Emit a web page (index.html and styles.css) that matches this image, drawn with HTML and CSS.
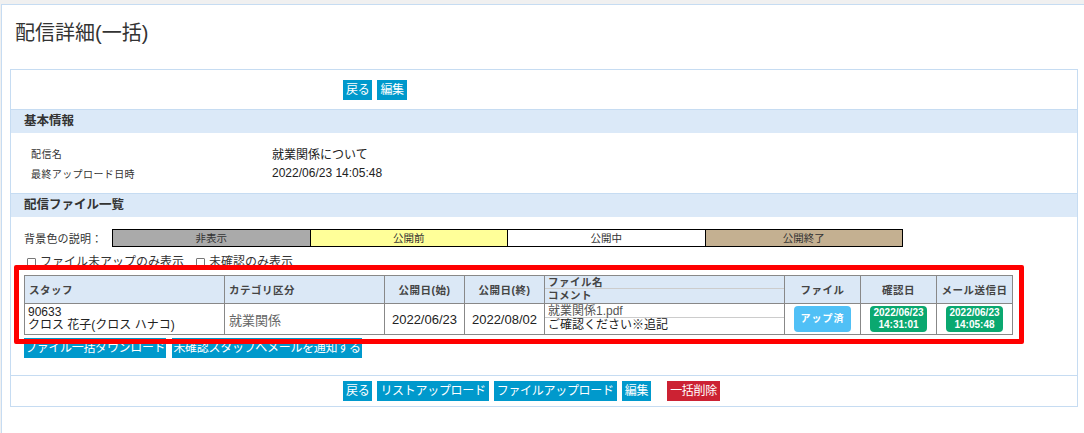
FILE: index.html
```html
<!DOCTYPE html>
<html lang="ja">
<head>
  <meta charset="UTF-8">
  <title>配信詳細(一括)</title>
  <link rel="stylesheet" href="styles.css">
</head>
<body>
<div class="page">
  <h1 class="page-title">配信詳細(一括)</h1>

  <div class="panel">
    <div class="toolbar toolbar-top">
      <a class="btn">戻る</a>
      <a class="btn">編集</a>
    </div>

    <!-- 基本情報 -->
    <div class="section-head">基本情報</div>
    <dl class="info">
      <div class="info-row">
        <dt>配信名</dt>
        <dd>就業関係について</dd>
      </div>
      <div class="info-row">
        <dt>最終アップロード日時</dt>
        <dd>2022/06/23 14:05:48</dd>
      </div>
    </dl>

    <!-- 配信ファイル一覧 -->
    <div class="section-head">配信ファイル一覧</div>
    <div class="files">
      <div class="legend">
        <span class="legend-label">背景色の説明：</span>
        <div class="legend-bar">
          <span class="lg-hidden">非表示</span>
          <span class="lg-before">公開前</span>
          <span class="lg-open">公開中</span>
          <span class="lg-closed">公開終了</span>
        </div>
      </div>

      <div class="filters">
        <label><span class="check"></span>ファイル未アップのみ表示</label>
        <label><span class="check"></span>未確認のみ表示</label>
      </div>

      <div class="result">
        <table class="file-table">
          <colgroup>
            <col class="c-staff">
            <col class="c-cat">
            <col class="c-date">
            <col class="c-date">
            <col class="c-file">
            <col class="c-up">
            <col class="c-badge">
            <col class="c-badge">
          </colgroup>
          <thead>
            <tr>
              <th class="left">スタッフ</th>
              <th class="left">カテゴリ区分</th>
              <th>公開日(始)</th>
              <th>公開日(終)</th>
              <th class="split">
                <div class="split-top">ファイル名</div>
                <div class="split-bottom">コメント</div>
              </th>
              <th>ファイル</th>
              <th>確認日</th>
              <th>メール送信日</th>
            </tr>
          </thead>
          <tbody>
            <tr>
              <td class="staff">90633<br>クロス 花子(クロス ハナコ)</td>
              <td class="cat">就業関係</td>
              <td class="center">2022/06/23</td>
              <td class="center">2022/08/02</td>
              <td class="split">
                <div class="split-top">就業関係1.pdf</div>
                <div class="split-bottom">ご確認ください※追記</div>
              </td>
              <td class="center"><span class="badge badge-up">アップ済</span></td>
              <td class="center"><span class="badge badge-done">2022/06/23<br>14:31:01</span></td>
              <td class="center"><span class="badge badge-done">2022/06/23<br>14:05:48</span></td>
            </tr>
          </tbody>
        </table>

        <div class="bulk-actions">
          <a class="btn btn-tight">ファイル一括ダウンロード</a>
          <a class="btn btn-tight">未確認スタッフへメールを通知する</a>
        </div>

        <div class="highlight"></div>
      </div>
    </div>

    <div class="toolbar toolbar-bottom">
      <a class="btn">戻る</a>
      <a class="btn">リストアップロード</a>
      <a class="btn">ファイルアップロード</a>
      <a class="btn">編集</a>
      <a class="btn btn-danger">一括削除</a>
    </div>
  </div>
</div>
</body>
</html>
```

FILE: styles.css
```css
* {
  box-sizing: border-box;
}

body {
  margin: 0;
  background: #f0f0f0;
  font-family: "Liberation Sans", "Noto Sans CJK JP", sans-serif;
  color: #333;
  overflow: hidden;
}

.page {
  height: 429px;
  margin: 4px 0 0 1px;
  background: #fff;
  border-top: 1px solid #c6dcf2;
  border-left: 1px solid #c6dcf2;
}

.page-title {
  margin: 0;
  padding: 13px 0 0 13px;
  font-size: 20px;
  font-weight: normal;
  line-height: 30px;
  color: #333;
}

.panel {
  width: 1068px;
  margin: 21px 0 0 8px;
  border: 1px solid #c6dcf2;
}

/* buttons */
.toolbar {
  display: flex;
  align-items: center;
  gap: 5px;
  padding-left: 332px;
}

.toolbar-top {
  height: 39px;
}

.toolbar-bottom {
  height: 31px;
  border-top: 1px solid #c6dcf2;
}

.btn {
  display: inline-block;
  height: 20px;
  padding: 0 3px;
  background: #0099cc;
  color: #fff;
  font-size: 12px;
  line-height: 20px;
  letter-spacing: -0.3px;
  white-space: nowrap;
  cursor: pointer;
}

.btn-tight {
  padding: 0 1px;
}

.btn-danger {
  margin-left: 11px;
  background: #cc2233;
}

/* sections */
.section-head {
  height: 24px;
  padding-left: 13px;
  border-top: 1px solid #c6dcf2;
  background: #dbe9f8;
  font-size: 12.5px;
  font-weight: bold;
  line-height: 23px;
  color: #333;
}

.info {
  height: 60px;
  margin: 0;
  padding: 10px 0 0 20px;
}

.info-row {
  display: flex;
  height: 20px;
  align-items: center;
}

.info dt {
  width: 241px;
  font-size: 10px;
  letter-spacing: 0.4px;
}

.info dd {
  margin: 0;
  font-size: 12px;
  color: #222;
}

.files {
  height: 158px;
  padding: 12px 0 0 13px;
}

.legend {
  display: flex;
  align-items: center;
  height: 18px;
}

.legend-label {
  width: 88px;
  font-size: 11px;
  letter-spacing: 0.2px;
  color: #333;
}

.legend-bar {
  display: flex;
  width: 791px;
  height: 18px;
  border: 1px solid #000;
}

.legend-bar span {
  flex: 1;
  text-align: center;
  font-size: 10.5px;
  line-height: 16px;
  color: #333;
}

.legend-bar span + span {
  border-left: 1px solid #000;
}

.lg-hidden {
  background: #aaaaaa;
}

.lg-before {
  background: #ffff99;
}

.lg-open {
  background: #fff;
}

.lg-closed {
  background: #c4b091;
}

.filters {
  display: flex;
  gap: 12px;
  height: 16px;
  margin: 7px 0 0 3px;
  font-size: 12px;
  line-height: 16px;
}

.filters label {
  display: flex;
  align-items: center;
}

.check {
  display: inline-block;
  width: 9px;
  height: 9px;
  margin-right: 4px;
  border: 1px solid #777;
  border-radius: 1px;
  background: #fff;
}

/* table */
.result {
  position: relative;
  margin-top: 5px;
  width: 989px;
}

.file-table {
  width: 989px;
  border-collapse: collapse;
  table-layout: fixed;
}

.c-staff { width: 200px; }
.c-cat { width: 160px; }
.c-date { width: 80px; }
.c-file { width: 240px; }
.c-up { width: 76px; }
.c-badge { width: 76px; }

.file-table th,
.file-table td {
  border: 1px solid #888;
  padding: 0;
}

.file-table th {
  height: 28px;
  background: #dbe8f6;
  font-size: 10.5px;
  font-weight: bold;
  color: #444;
  letter-spacing: 0.5px;
  text-align: center;
}

.file-table th.left {
  text-align: left;
  padding-left: 4px;
}

.file-table td {
  height: 31px;
  font-size: 12px;
  color: #222;
}

.file-table .center {
  text-align: center;
  font-size: 13px;
}

.file-table .staff {
  padding: 0 3px;
  line-height: 13px;
}

.file-table .cat {
  padding-left: 4px;
  color: #666;
  font-size: 13px;
}

.file-table .split {
  text-align: left;
  vertical-align: top;
}

.split-top {
  height: 14px;
  padding-left: 3px;
  border-bottom: 1px solid #ccc;
  line-height: 14px;
}

.split-bottom {
  padding-left: 3px;
  line-height: 15px;
}

th .split-top {
  height: 13px;
  line-height: 13px;
}

th .split-bottom {
  line-height: 13px;
}

td.split .split-top {
  color: #555;
}

.badge {
  display: inline-flex;
  align-items: center;
  justify-content: center;
  width: 57px;
  height: 26px;
  border-radius: 4px;
  color: #fff;
  font-size: 10px;
  font-weight: bold;
  line-height: 12px;
  vertical-align: middle;
}

.badge-up {
  background: #50c0f6;
  letter-spacing: 1px;
}

.badge-done {
  background: #0aa870;
}

.bulk-actions {
  display: flex;
  gap: 6px;
  margin-top: 3px;
}

/* annotation frame over the table */
.highlight {
  position: absolute;
  left: -10px;
  top: -10px;
  width: 1010px;
  height: 79px;
  border: 5px solid #ff0000;
  border-radius: 2px;
}
```
